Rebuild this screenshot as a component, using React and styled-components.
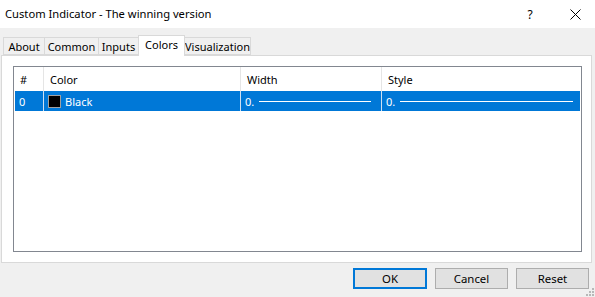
import React from "react";
import styled, { createGlobalStyle } from "styled-components";

const GlobalStyle = createGlobalStyle`
  html, body {
    margin: 0;
    padding: 0;
    background: #f0f0f0;
  }
  body {
    font-family: "Noto Sans", "Liberation Sans", sans-serif;
    font-size: 11px;
    color: #000;
  }
`;

const tabs = [
  { label: "About", width: 42 },
  { label: "Common", width: 55 },
  { label: "Inputs", width: 41 },
  { label: "Colors", width: 47 },
  { label: "Visualization", width: 67 },
];

const columns = [
  { key: "#", width: 30 },
  { key: "Color", width: 197 },
  { key: "Width", width: 141 },
  { key: "Style", width: null },
];

export default function App() {
  return (
    <Window>
      <GlobalStyle />
      <TitleBar>
        <Title>Custom Indicator - The winning version</Title>
        <TitleButton className="help">?</TitleButton>
        <TitleButton>
          <svg width="11" height="11" viewBox="0 0 11 11">
            <path d="M0.5 0.5 L10.5 10.5 M10.5 0.5 L0.5 10.5" stroke="#000" strokeWidth="1" />
          </svg>
        </TitleButton>
      </TitleBar>

      <Body>
        <TabStrip>
          {tabs.map((t) => (
            <Tab key={t.label} $width={t.width} $active={t.label === "Colors"}>
              {t.label}
            </Tab>
          ))}
        </TabStrip>

        <Panel>
          <ListBox>
            <HeaderRow>
              {columns.map((c) => (
                <HeaderCell key={c.key} $width={c.width}>
                  {c.key}
                </HeaderCell>
              ))}
            </HeaderRow>
            <SelectedRow>
              <Cell $width={29}>0</Cell>
              <Cell $width={197}>
                <Swatch />
                Black
              </Cell>
              <Cell $width={141}>
                0.
                <LineSample />
              </Cell>
              <Cell $last>
                0.
                <LineSample />
              </Cell>
            </SelectedRow>
          </ListBox>
        </Panel>

        <Footer>
          <Button $default>OK</Button>
          <Button>Cancel</Button>
          <Button>Reset</Button>
          <Grip>
            <svg width="10" height="10" viewBox="0 0 10 10">
              <g fill="#b8b8b8">
                <rect x="7" y="1" width="2" height="2" />
                <rect x="4" y="4" width="2" height="2" />
                <rect x="7" y="4" width="2" height="2" />
                <rect x="1" y="7" width="2" height="2" />
                <rect x="4" y="7" width="2" height="2" />
                <rect x="7" y="7" width="2" height="2" />
              </g>
            </svg>
          </Grip>
        </Footer>
      </Body>
    </Window>
  );
}

const Window = styled.div`
  width: 595px;
  height: 297px;
  background: #f0f0f0;
  display: flex;
  flex-direction: column;
  overflow: hidden;
`;

const TitleBar = styled.div`
  height: 28px;
  background: #fff;
  display: flex;
  align-items: center;
  padding-left: 5px;
  flex-shrink: 0;
`;

const Title = styled.div`
  flex: 1;
  font-size: 11.2px;
  color: #000;
  margin-top: -2px;
`;

const TitleButton = styled.div`
  width: 40px;
  height: 28px;
  display: flex;
  align-items: center;
  justify-content: center;
  font-size: 12px;
  &.help {
    margin-right: 5px;
  }
`;

const Body = styled.div`
  flex: 1;
  display: flex;
  flex-direction: column;
  position: relative;
`;

const TabStrip = styled.div`
  display: flex;
  align-items: flex-end;
  height: 27px;
  padding-left: 3px;
  position: relative;
  z-index: 1;
`;

const Tab = styled.div`
  width: ${(p) => p.$width}px;
  height: ${(p) => (p.$active ? "21px" : "18px")};
  margin-left: -1px;
  margin-bottom: ${(p) => (p.$active ? "-1px" : "0")};
  border: 1px solid #d9d9d9;
  border-bottom: ${(p) => (p.$active ? "none" : "1px solid #d9d9d9")};
  background: ${(p) => (p.$active ? "#fff" : "#f0f0f0")};
  display: flex;
  justify-content: center;
  align-items: ${(p) => (p.$active ? "flex-start" : "center")};
  padding-top: ${(p) => (p.$active ? "1px" : "0")};
  box-sizing: border-box;
  font-size: 11px;
  white-space: nowrap;
  z-index: ${(p) => (p.$active ? 2 : 1)};
  &:first-child {
    margin-left: 0;
  }
`;

const Panel = styled.div`
  margin: 0 3px 0 1px;
  height: 208px;
  box-sizing: border-box;
  background: #fff;
  border: 1px solid #d9d9d9;
  padding: 10px 9px 10px 11px;
  display: flex;
`;

const ListBox = styled.div`
  flex: 1;
  border: 1px solid #828790;
  background: #fff;
  display: flex;
  flex-direction: column;
`;

const HeaderRow = styled.div`
  height: 24px;
  display: flex;
`;

const HeaderCell = styled.div`
  ${(p) => (p.$width ? `width: ${p.$width}px;` : "flex: 1;")}
  flex-shrink: 0;
  box-sizing: border-box;
  border-right: ${(p) => (p.$width ? "1px solid #e5e5e5" : "none")};
  padding-left: 6px;
  display: flex;
  align-items: center;
  font-size: 11px;
`;

const SelectedRow = styled.div`
  height: 20px;
  margin: 0 1px;
  background: #0078d7;
  color: #fff;
  display: flex;
`;

const Cell = styled.div`
  ${(p) => (p.$width ? `width: ${p.$width}px;` : "flex: 1;")}
  flex-shrink: 0;
  box-sizing: border-box;
  border-right: ${(p) => (p.$last ? "none" : "1px solid #cfe0f1")};
  padding: 0 ${(p) => (p.$last ? "7px" : "10px")} 0 4px;
  display: flex;
  align-items: center;
  font-size: 11px;
`;

const Swatch = styled.span`
  width: 11px;
  height: 11px;
  background: #000;
  border: 1px solid #a0a0a0;
  margin-right: 4px;
  flex-shrink: 0;
`;

const LineSample = styled.span`
  flex: 1;
  height: 1px;
  background: #fff;
  margin-left: 5px;
  margin-top: 1px;
`;

const Footer = styled.div`
  flex: 1;
  display: flex;
  justify-content: flex-end;
  align-items: flex-start;
  gap: 8px;
  padding: 5px 6px 0 0;
  position: relative;
`;

const Button = styled.button`
  width: ${(p) => (p.$default ? "74px" : "73px")};
  height: 21px;
  box-sizing: border-box;
  background: #e1e1e1;
  border: ${(p) => (p.$default ? "2px solid #0078d7" : "1px solid #adadad")};
  font-family: "Noto Sans", "Liberation Sans", sans-serif;
  font-size: 11.4px;
  color: #000;
  padding: 0;
  display: flex;
  align-items: center;
  justify-content: center;
`;

const Grip = styled.div`
  position: absolute;
  right: 0;
  bottom: 0;
  width: 10px;
  height: 10px;
  line-height: 0;
`;
